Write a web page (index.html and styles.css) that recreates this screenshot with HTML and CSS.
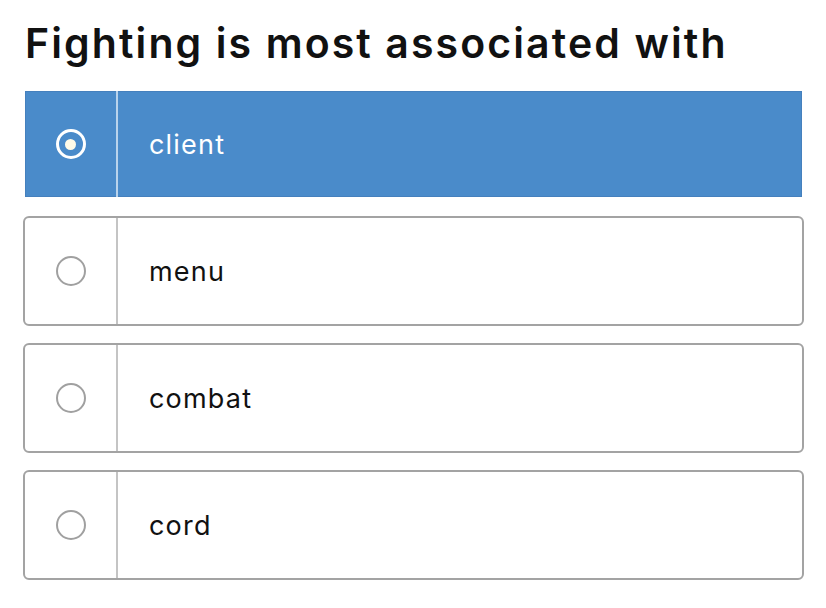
FILE: index.html
```html
<!DOCTYPE html>
<html>
<head>
<meta charset="utf-8">
<link rel="stylesheet" href="styles.css">
</head>
<body>
<div class="quiz">
  <h1 class="question">Fighting is most associated with</h1>
  <div class="options">
    <div class="option selected">
      <div class="radio-cell"><span class="radio"></span></div>
      <div class="label">client</div>
    </div>
    <div class="option">
      <div class="radio-cell"><span class="radio"></span></div>
      <div class="label">menu</div>
    </div>
    <div class="option">
      <div class="radio-cell"><span class="radio"></span></div>
      <div class="label">combat</div>
    </div>
    <div class="option">
      <div class="radio-cell"><span class="radio"></span></div>
      <div class="label">cord</div>
    </div>
  </div>
</div>
</body>
</html>
```

FILE: styles.css
```css
html, body {
  margin: 0;
  padding: 0;
  background: #ffffff;
}
.quiz {
  padding: 14px 22px 0 23px;
  font-family: "Inter", "Lato", sans-serif;
  color: #111;
}
.question {
  margin: 0 0 17px 2px;
  font-size: 41px;
  line-height: 58px;
  font-weight: 600;
  letter-spacing: 2.1px;
  white-space: nowrap;
}
.options {
  display: flex;
  flex-direction: column;
  gap: 17px;
}
.option {
  display: flex;
  height: 110px;
  box-sizing: border-box;
  border: 2px solid #a3a3a3;
  border-radius: 6px;
  background: #fff;
}
.option.selected {
  border-color: transparent;
  border-radius: 0;
  background: #4a8bca;
  background-clip: padding-box;
  box-shadow: inset 0 0 0 1px #4580bd;
}
.radio-cell {
  width: 91px;
  flex: none;
  display: flex;
  align-items: center;
  justify-content: center;
  border-right: 2px solid #c4c4c4;
}
.selected .radio-cell {
  border-right-color: #b9d3ec;
}
.radio {
  width: 30px;
  height: 30px;
  box-sizing: border-box;
  border: 2px solid #a0a0a0;
  border-radius: 50%;
  position: relative;
}
.selected .radio {
  border: 3px solid #ffffff;
}
.selected .radio::after {
  content: "";
  position: absolute;
  left: 50%;
  top: 50%;
  width: 11px;
  height: 11px;
  margin: -5.5px 0 0 -5.5px;
  border-radius: 50%;
  background: #fffbe8;
}
.label {
  display: flex;
  align-items: center;
  padding-left: 31px;
  font-size: 27px;
  letter-spacing: 1.2px;
  color: #111;
}
.selected .label {
  color: #ffffff;
}
```
